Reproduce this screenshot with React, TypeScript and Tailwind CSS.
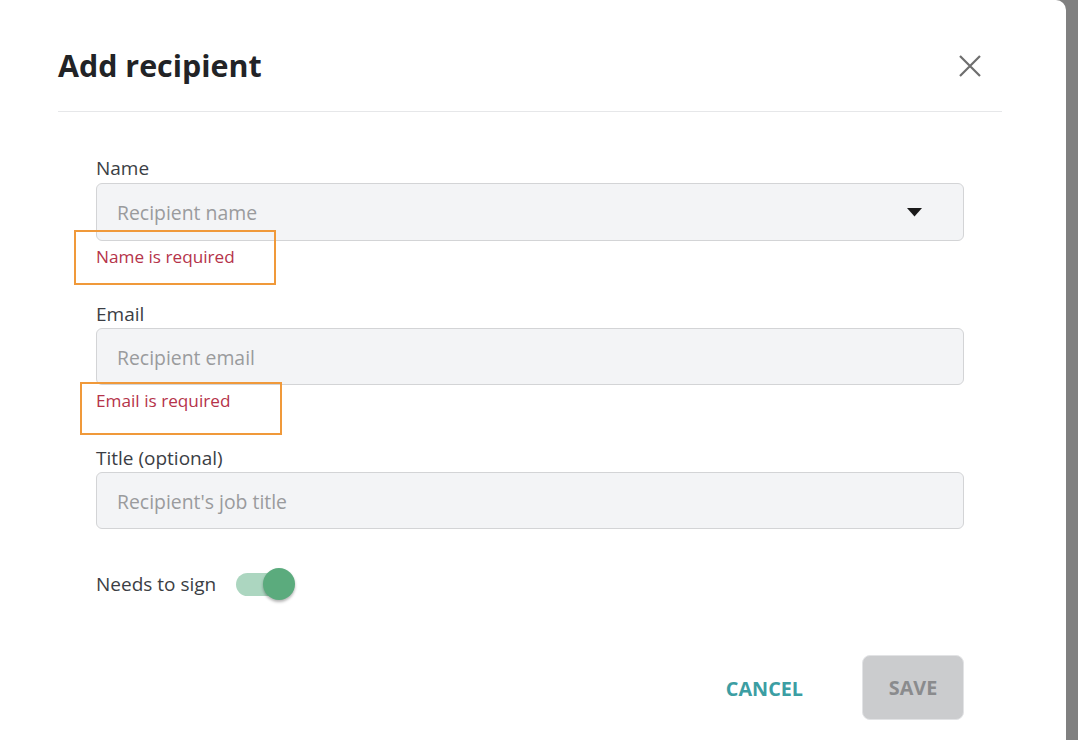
import React, { useState } from "react";

function Field({
  label,
  placeholder,
  error,
  select,
  inputClass,
}: {
  label: string;
  placeholder: string;
  error?: string;
  select?: boolean;
  inputClass: string;
}) {
  return (
    <div>
      <div className="text-[19px] leading-[24px] text-[#3b3e44]">{label}</div>
      <div
        className={`flex items-center justify-between rounded-[6px] border border-[#d3d4d6] bg-[#f3f4f6] pl-[20px] pr-[41px] ${inputClass}`}
      >
        <span className="pt-[2px] text-[19.4px] text-[#9a9b9d]">{placeholder}</span>
        {select && (
          <svg width="15" height="9" viewBox="0 0 15 9">
            <path d="M0 0h15L7.5 8.5z" fill="#1a1a1a" />
          </svg>
        )}
      </div>
      {error && <div className="mt-[4px] text-[17.2px] leading-[24px] text-[#b5334a]">{error}</div>}
    </div>
  );
}

export default function App() {
  const [needsSign, setNeedsSign] = useState(true);

  return (
    <div className="flex h-[740px] w-full bg-[#808080] font-['Open_Sans',sans-serif]">
      <div className="relative h-full w-[1066px] rounded-tr-[10px] bg-white">
        {/* header */}
        <div className="ml-[58px] flex h-[112px] w-[944px] items-center justify-between border-b border-[#e6e7e9] pt-[20px]">
          <h2 className="text-[30.4px] font-bold text-[#222326]">Add recipient</h2>
          <button className="mr-[20px] text-[#6e6e6e]">
            <svg width="24" height="24" viewBox="0 0 24 24" fill="none" stroke="currentColor" strokeWidth="2.2">
              <path d="M2 2l20 20M22 2L2 22" />
            </svg>
          </button>
        </div>

        {/* form */}
        <div className="ml-[96px] w-[868px] pt-[44px]">
          <Field label="Name" placeholder="Recipient name" error="Name is required" select inputClass="mt-[3px] h-[58px]" />
          <div className="mt-[33px]">
            <Field label="Email" placeholder="Recipient email" error="Email is required" inputClass="mt-[2px] h-[57px]" />
          </div>
          <div className="mt-[33px]">
            <Field label="Title (optional)" placeholder="Recipient's job title" inputClass="mt-[2px] h-[57px]" />
          </div>

          <div className="mt-[39px] flex h-[32px] items-center">
            <span className="text-[19px] text-[#3b3e44]">Needs to sign</span>
            <button
              onClick={() => setNeedsSign(!needsSign)}
              className="relative ml-[20px] flex h-[32px] w-[60px] items-center"
            >
              <span className="h-[23px] w-[54px] rounded-full bg-[#acd6c0]" />
              <span className="absolute left-[27px] top-0 h-[32px] w-[32px] rounded-full bg-[#5bab7d] shadow-[0_2px_3px_rgba(0,0,0,0.3)]" />
            </button>
          </div>

          <div className="mt-[55px] flex items-center justify-end">
            <button className="mr-[59px] pt-[3px] text-[19.8px] font-bold text-[#3c9ea3]">CANCEL</button>
            <button className="h-[65px] w-[102px] rounded-[8px] border border-[#e2e3e5] bg-[#cbccce] text-[19.8px] font-bold text-[#8a8b8d]">
              SAVE
            </button>
          </div>
        </div>

        {/* highlight annotations */}
        <div className="pointer-events-none absolute left-[74px] top-[230px] h-[55px] w-[202px] border-2 border-[#f0993a]" />
        <div className="pointer-events-none absolute left-[80px] top-[382px] h-[53px] w-[202px] border-2 border-[#f0993a]" />
      </div>
      <div className="flex-1" />
    </div>
  );
}
